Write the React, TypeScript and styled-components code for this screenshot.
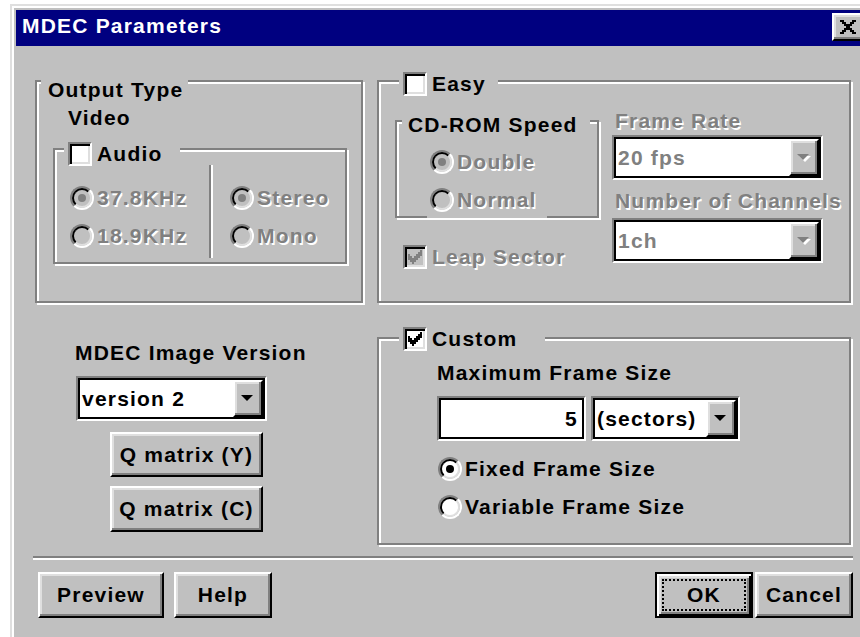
import React from 'react';
import styled, { createGlobalStyle, css } from 'styled-components';

const FACE = '#c0c0c0';
const SHADOW = '#808080';
const LIGHT = '#dfdfdf';
const WHITE = '#ffffff';
const BLACK = '#000000';
const NAVY = '#000080';
const UI_FONT = '"Liberation Sans", Arial, sans-serif';

// 2x pixel patterns of the classic glyphs
const CHECK_ROWS = ['......#', '.....##', '#...###', '##.###.', '#####..', '.###...', '..#....'];
const CLOSE_ROWS = ['##....##', '.##..##.', '..####..', '...##...', '..####..', '.##..##.', '##....##'];

const GlobalStyle = createGlobalStyle`
  *, *::before, *::after { box-sizing: border-box; }
  html, body {
    margin: 0;
    height: 100%;
    overflow: hidden;
    background: ${WHITE};
  }
  body {
    font-family: ${UI_FONT};
    font-weight: bold;
    font-size: 21px;
    line-height: 24px;
    letter-spacing: 1.2px;
    color: ${BLACK};
  }
`;

const disabledText = css`
  color: ${SHADOW};
  text-shadow: 1.5px 1.5px 0 ${WHITE};
`;

const raised = css`
  background: ${FACE};
  border: 2px solid;
  border-color: ${WHITE} ${BLACK} ${BLACK} ${WHITE};
  box-shadow: inset -2px -2px 0 ${SHADOW}, inset 2px 2px 0 ${LIGHT};
`;

function PixelGlyph({ rows, color, scale = 2 }: { rows: string[]; color: string; scale?: number }) {
  const cells: React.ReactNode[] = [];
  rows.forEach((row, y) =>
    [...row].forEach((c, x) => {
      if (c === '#') {
        cells.push(<rect key={`${x}-${y}`} x={x * scale} y={y * scale} width={scale} height={scale} />);
      }
    }),
  );
  return (
    <svg width={rows[0].length * scale} height={rows.length * scale} fill={color} shapeRendering="crispEdges">
      {cells}
    </svg>
  );
}

function DropArrow({ disabled = false }: { disabled?: boolean }) {
  return (
    <svg width="14" height="8" viewBox="0 0 14 8">
      {disabled && <polygon points="2,2 14,2 8,8" fill={WHITE} />}
      <polygon points="0,0 12,0 6,6" fill={disabled ? SHADOW : BLACK} />
    </svg>
  );
}

function CheckBox({ checked = false, disabled = false }: { checked?: boolean; disabled?: boolean }) {
  return (
    <CheckFrame $disabled={disabled}>
      {checked && <PixelGlyph rows={CHECK_ROWS} color={disabled ? SHADOW : BLACK} />}
    </CheckFrame>
  );
}

function Radio({ checked = false, disabled = false }: { checked?: boolean; disabled?: boolean }) {
  return (
    <RadioOuter>
      <RadioInner $disabled={disabled}>{checked && <RadioDot $disabled={disabled} />}</RadioInner>
    </RadioOuter>
  );
}

function ComboBox({ value, width, disabled = false }: { value: string; width: number; disabled?: boolean }) {
  return (
    <Field $width={width}>
      <FieldText $disabled={disabled}>{value}</FieldText>
      <DropButton>
        <DropArrow disabled={disabled} />
      </DropButton>
    </Field>
  );
}

function OptionRow({ label, checked, disabled }: { label: string; checked?: boolean; disabled?: boolean }) {
  return (
    <RadioRow>
      <Radio checked={checked} disabled={disabled} />
      <Label $disabled={disabled}>{label}</Label>
    </RadioRow>
  );
}

export default function App() {
  return (
    <>
      <GlobalStyle />
      <Window>
        <TitleBar>
          <Caption>MDEC Parameters</Caption>
          <CloseButton aria-label="Close">
            <PixelGlyph rows={CLOSE_ROWS} color={BLACK} />
          </CloseButton>
        </TitleBar>

        <DialogBody>
          <MainGrid>
            {/* Output Type */}
            <GroupBox $pad="24px 0 0 16px">
              <Legend $left={4} $top={-4} $padL={7} $padR={5}>
                Output Type
              </Legend>
              <Label $ml={15}>Video</Label>
              <GroupBox $w={294} $h={116} $mt={18}>
                <Legend $left={9} $top={-8} $padL={4} $padR={18}>
                  <CheckBox />
                  <span>Audio</span>
                </Legend>
                <AudioColumns>
                  <RadioStack $w={139} $pt={21}>
                    <OptionRow label="37.8KHz" checked disabled />
                    <OptionRow label="18.9KHz" disabled />
                  </RadioStack>
                  <VDivider />
                  <RadioStack $ml={17} $pt={21}>
                    <OptionRow label="Stereo" checked disabled />
                    <OptionRow label="Mono" disabled />
                  </RadioStack>
                </AudioColumns>
              </GroupBox>
            </GroupBox>

            {/* Easy */}
            <GroupBox>
              <Legend $left={20} $top={-10} $padL={4} $padR={12}>
                <CheckBox />
                <span>Easy</span>
              </Legend>
              <EasyGrid>
                <Column>
                  <GroupBox $h={98} $mt={11} $pad="28px 0 0 30px">
                    <Legend $left={5} $top={-9} $padL={6} $padR={12}>
                      CD-ROM Speed
                    </Legend>
                    <RadioStack>
                      <SpeedOption>
                        <Radio checked disabled />
                        <Label $disabled>Double</Label>
                      </SpeedOption>
                      <SpeedOption $reach>
                        <Radio disabled />
                        <Label $disabled>Normal</Label>
                      </SpeedOption>
                    </RadioStack>
                  </GroupBox>
                  <CheckRow $ml={8} $mt={27}>
                    <CheckBox checked disabled />
                    <Label $disabled>Leap Sector</Label>
                  </CheckRow>
                </Column>
                <Column>
                  <Label $disabled $ml={3}>
                    Frame Rate
                  </Label>
                  <Spacer $h={2} />
                  <ComboBox value="20 fps" width={211} disabled />
                  <Label $disabled $ml={3} $mt={9}>
                    Number of Channels
                  </Label>
                  <Spacer $h={5} />
                  <ComboBox value="1ch" width={211} disabled />
                </Column>
              </EasyGrid>
            </GroupBox>

            {/* Image version */}
            <ImageColumn>
              <Label>MDEC Image Version</Label>
              <Indent $ml={1} $mt={11}>
                <ComboBox value="version 2" width={191} />
              </Indent>
              <Indent $ml={35} $mt={11}>
                <PushButton $width={153} $height={45}>
                  Q matrix (Y)
                </PushButton>
              </Indent>
              <Indent $ml={35} $mt={9}>
                <PushButton $width={153}>Q matrix (C)</PushButton>
              </Indent>
            </ImageColumn>

            {/* Custom */}
            <GroupBox $pad="22px 0 0 58px">
              <Legend $left={20} $top={-12} $padL={4} $padR={28}>
                <CheckBox checked />
                <span>Custom</span>
              </Legend>
              <Label>Maximum Frame Size</Label>
              <SizeRow>
                <Field $width={149}>
                  <FieldText $right>5</FieldText>
                </Field>
                <ComboBox value="(sectors)" width={149} />
              </SizeRow>
              <RadioStack $ml={1} $mt={16}>
                <OptionRow label="Fixed Frame Size" checked />
                <OptionRow label="Variable Frame Size" />
              </RadioStack>
            </GroupBox>
          </MainGrid>

          <Separator />

          <Footer>
            <ButtonGroup $gap={10}>
              <PushButton $width={126}>Preview</PushButton>
              <PushButton $width={98}>Help</PushButton>
            </ButtonGroup>
            <ButtonGroup $gap={2}>
              <PushButton $width={98} $isDefault>
                <FocusRing>OK</FocusRing>
              </PushButton>
              <PushButton $width={98}>Cancel</PushButton>
            </ButtonGroup>
          </Footer>
        </DialogBody>
      </Window>
    </>
  );
}

const Window = styled.div`
  margin: 4px 0 0 10px;
  width: 860px;
  height: 660px;
  padding: 4px 4px 0 4px;
  background: ${FACE};
  border-top: 2px solid ${LIGHT};
  border-left: 2px solid ${LIGHT};
  box-shadow: inset 2px 2px 0 ${WHITE};
`;
const TitleBar = styled.div`
  display: flex;
  align-items: flex-start;
  height: 36px;
  padding: 4px 2px 0 6px;
  background: ${NAVY};
`;
const Caption = styled.div`
  flex: 1;
  color: ${WHITE};
  white-space: nowrap;
`;
const CloseButton = styled.div`
  ${raised};
  display: flex;
  align-items: center;
  justify-content: center;
  width: 32px;
  height: 28px;
  margin-top: -1px;
`;
const DialogBody = styled.div`
  padding: 34px 0 0 17px;
`;
const MainGrid = styled.div`
  display: grid;
  grid-template-columns: 328px 474px;
  grid-template-rows: 223px 208px;
  column-gap: 14px;
  row-gap: 34px;
  margin-left: 2px;
`;
const GroupBox = styled.div<{ $w?: number; $h?: number; $mt?: number; $pad?: string }>`
  position: relative;
  width: ${({ $w }) => ($w ? `${$w}px` : 'auto')};
  height: ${({ $h }) => ($h ? `${$h}px` : 'auto')};
  margin-top: ${({ $mt }) => $mt ?? 0}px;
  padding: ${({ $pad }) => $pad ?? '0'};
  border: 2px solid ${SHADOW};
  box-shadow: inset 2px 2px 0 ${WHITE}, 2px 2px 0 ${WHITE};
`;
const Legend = styled.div<{ $left: number; $top: number; $padL: number; $padR: number }>`
  position: absolute;
  left: ${({ $left }) => $left}px;
  top: ${({ $top }) => $top}px;
  display: flex;
  align-items: center;
  gap: 5px;
  padding: 0 ${({ $padR }) => $padR}px 0 ${({ $padL }) => $padL}px;
  background: ${FACE};
  white-space: nowrap;
`;
const Label = styled.div<{ $disabled?: boolean; $ml?: number; $mt?: number }>`
  margin: ${({ $mt }) => $mt ?? 0}px 0 0 ${({ $ml }) => $ml ?? 0}px;
  white-space: nowrap;
  ${({ $disabled }) => $disabled && disabledText}
`;
const AudioColumns = styled.div`
  display: flex;
  height: 100%;
  padding: 15px 0 4px 15px;
`;
const RadioStack = styled.div<{ $w?: number; $ml?: number; $mt?: number; $pt?: number }>`
  display: flex;
  flex-direction: column;
  gap: 14px;
  width: ${({ $w }) => ($w ? `${$w}px` : 'auto')};
  margin: ${({ $mt }) => $mt ?? 0}px 0 0 ${({ $ml }) => $ml ?? 0}px;
  padding-top: ${({ $pt }) => $pt ?? 0}px;
`;
const VDivider = styled.div`
  width: 4px;
  border-left: 2px solid ${SHADOW};
  border-right: 2px solid ${WHITE};
`;
const RadioRow = styled.div`
  display: flex;
  align-items: center;
  gap: 3px;
  height: 24px;
`;
// the lower option's control rect hides the group's bottom edge
const SpeedOption = styled(RadioRow)<{ $reach?: boolean }>`
  align-items: flex-start;
  width: 120px;
  height: ${({ $reach }) => ($reach ? 30 : 24)}px;
  padding-left: 3px;
  background: ${FACE};
`;
const CheckRow = styled.div<{ $ml?: number; $mt?: number }>`
  display: flex;
  align-items: center;
  gap: 5px;
  margin: ${({ $mt }) => $mt ?? 0}px 0 0 ${({ $ml }) => $ml ?? 0}px;
`;
const EasyGrid = styled.div`
  display: grid;
  grid-template-columns: 204px 211px;
  column-gap: 13px;
  align-items: start;
  padding: 27px 0 0 16px;
`;
const Column = styled.div`
  display: flex;
  flex-direction: column;
`;
const Spacer = styled.div<{ $h: number }>`
  height: ${({ $h }) => $h}px;
`;
const ImageColumn = styled.div`
  display: flex;
  flex-direction: column;
  padding: 4px 0 0 40px;
`;
const Indent = styled.div<{ $ml: number; $mt: number }>`
  margin: ${({ $mt }) => $mt}px 0 0 ${({ $ml }) => $ml}px;
`;
const SizeRow = styled.div`
  display: flex;
  gap: 5px;
  margin-top: 11px;
`;
const CheckFrame = styled.span<{ $disabled: boolean }>`
  display: flex;
  align-items: center;
  justify-content: center;
  flex: none;
  width: 24px;
  height: 24px;
  border: 2px solid;
  border-color: ${SHADOW} ${WHITE} ${WHITE} ${SHADOW};
  box-shadow: inset 2px 2px 0 ${BLACK}, inset -2px -2px 0 ${LIGHT};
  background: ${({ $disabled }) => ($disabled ? FACE : WHITE)};
`;
const RadioOuter = styled.span`
  display: flex;
  flex: none;
  width: 24px;
  height: 24px;
  border-radius: 50%;
  border: 2px solid;
  border-color: ${SHADOW} ${WHITE} ${WHITE} ${SHADOW};
`;
const RadioInner = styled.span<{ $disabled: boolean }>`
  display: flex;
  align-items: center;
  justify-content: center;
  flex: 1;
  border-radius: 50%;
  border: 2px solid;
  border-color: ${BLACK} ${LIGHT} ${LIGHT} ${BLACK};
  background: ${({ $disabled }) => ($disabled ? FACE : WHITE)};
`;
const RadioDot = styled.span<{ $disabled: boolean }>`
  width: 8px;
  height: 8px;
  border-radius: 50%;
  background: ${({ $disabled }) => ($disabled ? SHADOW : BLACK)};
`;
const Field = styled.div<{ $width: number }>`
  display: flex;
  width: ${({ $width }) => $width}px;
  height: 45px;
  padding: 2px;
  border: 2px solid;
  border-color: ${SHADOW} ${WHITE} ${WHITE} ${SHADOW};
  box-shadow: inset 0 0 0 2px ${BLACK};
  background: ${WHITE};
`;
const FieldText = styled.div<{ $disabled?: boolean; $right?: boolean }>`
  display: flex;
  align-items: center;
  justify-content: ${({ $right }) => ($right ? 'flex-end' : 'flex-start')};
  flex: 1;
  padding: 0 4px 0 2px;
  white-space: nowrap;
  overflow: hidden;
  ${({ $disabled }) => $disabled && disabledText}
`;
const DropButton = styled.span`
  ${raised};
  display: flex;
  align-items: center;
  justify-content: center;
  flex: none;
  width: 30px;
`;
const Separator = styled.div`
  width: 820px;
  height: 4px;
  margin-top: 11px;
  border-top: 2px solid ${SHADOW};
  border-bottom: 2px solid ${WHITE};
`;
const Footer = styled.div`
  display: flex;
  justify-content: space-between;
  width: 820px;
  margin-top: 12px;
  padding-left: 5px;
`;
const ButtonGroup = styled.div<{ $gap: number }>`
  display: flex;
  gap: ${({ $gap }) => $gap}px;
`;
const PushButton = styled.button<{ $width: number; $height?: number; $isDefault?: boolean }>`
  ${raised};
  display: flex;
  align-items: center;
  justify-content: center;
  width: ${({ $width }) => $width}px;
  height: ${({ $height }) => $height ?? 46}px;
  padding: 0;
  font: inherit;
  letter-spacing: inherit;
  color: ${BLACK};
  white-space: nowrap;

  ${({ $isDefault }) =>
    $isDefault &&
    css`
      padding: 5px;
      border-color: ${BLACK};
      box-shadow: inset 2px 2px 0 ${WHITE}, inset -2px -2px 0 ${BLACK}, inset 4px 4px 0 ${LIGHT},
        inset -4px -4px 0 ${SHADOW};
    `}
`;
const FocusRing = styled.span`
  display: flex;
  align-items: center;
  justify-content: center;
  flex: 1;
  align-self: stretch;
  border: 2px dotted ${BLACK};
`;
